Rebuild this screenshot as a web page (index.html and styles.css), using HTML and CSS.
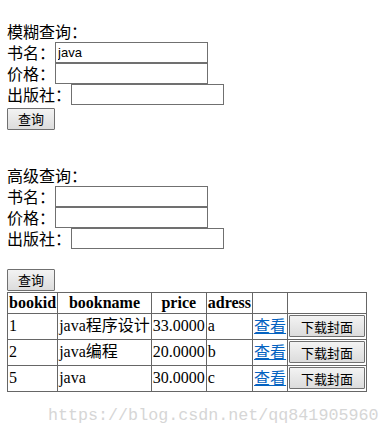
FILE: index.html
```html
<!DOCTYPE html>
<html lang="zh">
<head>
  <meta charset="UTF-8">
  <title>图书查询</title>
  <link rel="stylesheet" href="styles.css">
</head>
<body>
  <form class="search">
    <div class="title">模糊查询：</div>
    <div class="row"><span>书名：</span><input type="text" value="java"></div>
    <div class="row"><span>价格：</span><input type="text"></div>
    <div class="row"><span>出版社：</span><input type="text"></div>
    <button type="button" class="btn">查询</button>
  </form>

  <form class="search advanced">
    <div class="title">高级查询：</div>
    <div class="row"><span>书名：</span><input type="text"></div>
    <div class="row"><span>价格：</span><input type="text"></div>
    <div class="row"><span>出版社：</span><input type="text"></div>
    <button type="button" class="btn submit">查询</button>
  </form>

  <table class="books">
    <tr><th>bookid</th><th>bookname</th><th>price</th><th>adress</th><th></th><th class="wide"></th></tr>
    <tr><td>1</td><td>java程序设计</td><td>33.0000</td><td>a</td><td><a href="#">查看</a></td><td><button type="button" class="btn dl">下载封面</button></td></tr>
    <tr><td>2</td><td>java编程</td><td>20.0000</td><td>b</td><td><a href="#">查看</a></td><td><button type="button" class="btn dl">下载封面</button></td></tr>
    <tr><td>5</td><td>java</td><td>30.0000</td><td>c</td><td><a href="#">查看</a></td><td><button type="button" class="btn dl">下载封面</button></td></tr>
  </table>

  <div class="mark">https://blog.csdn.net/qq841905960</div>
</body>
</html>
```

FILE: styles.css
```css
body {
  margin: 0;
  padding: 21px 0 0 7px;
  font-family: "Noto Sans CJK SC", sans-serif;
  font-size: 16px;
  color: #000;
  background: #fff;
}
.search {
  margin: 0;
}
.title, .row {
  height: 21px;
  line-height: 21px;
}
.row {
  display: flex;
  align-items: center;
}
.row input {
  box-sizing: border-box;
  width: 153px;
  height: 21px;
  margin: 0;
  padding: 1px 2px;
  border: 1px solid #707070;
  font-family: "Liberation Sans", sans-serif;
  font-size: 13px;
}
.btn {
  box-sizing: border-box;
  height: 22px;
  width: 48px;
  margin: 1px 0 0;
  padding: 0;
  border: 1px solid #707070;
  border-radius: 1px;
  background: linear-gradient(#f3f3f3, #dcdcdc);
  font-family: "Noto Sans CJK SC", sans-serif;
  font-size: 13px;
  color: #000;
}
.advanced {
  margin-top: 35px;
}
.submit {
  margin-top: 20px;
}
.books {
  border-collapse: collapse;
  width: 360px;
  margin-top: 1px;
  font-family: "Liberation Serif", "Noto Sans CJK SC", serif;
  font-size: 16px;
}
.books th, .books td {
  border: 1px solid #666;
  padding: 1px;
  white-space: nowrap;
}
.books th {
  height: 18px;
  line-height: 18px;
}
.books td {
  height: 23px;
  line-height: 20px;
}
.books th.wide {
  width: 76px;
}
.books a {
  color: #0563c1;
  font-family: "Noto Sans CJK SC", sans-serif;
}
.btn.dl {
  width: 76px;
  margin: 0;
}
.mark {
  margin: 14px 0 0 41px;
  font-family: "Liberation Mono", monospace;
  font-size: 16.7px;
  color: #d6d6d6;
}
```
